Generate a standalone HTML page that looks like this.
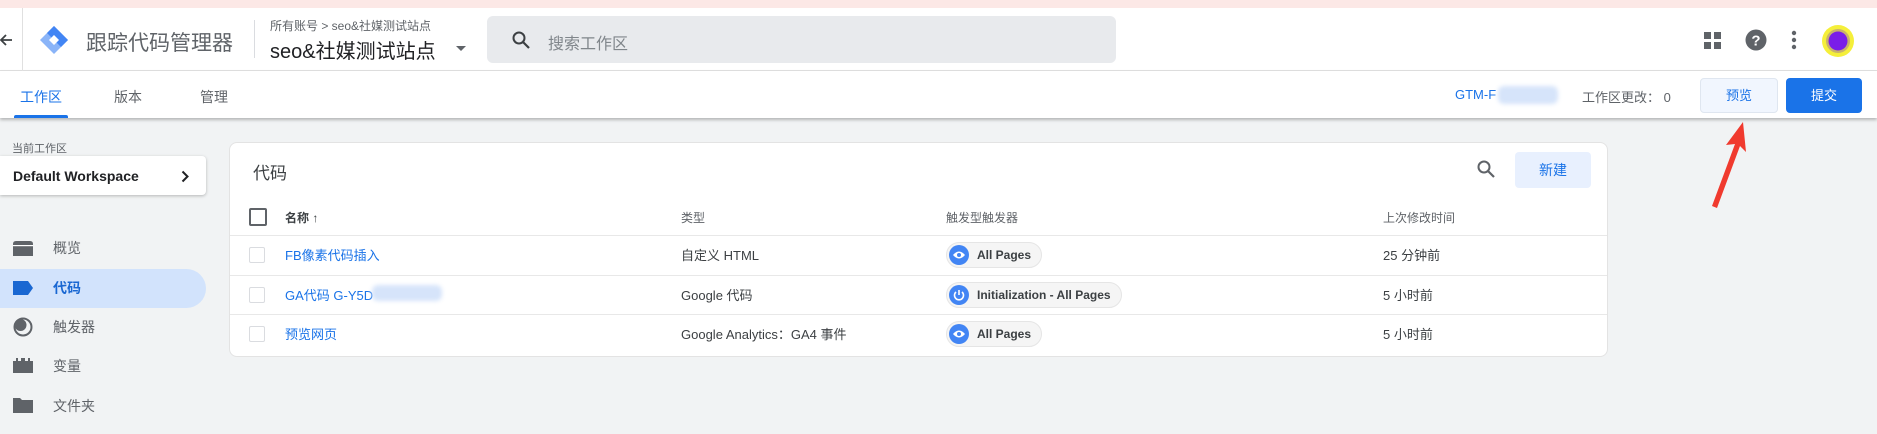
<!DOCTYPE html>
<html><head><meta charset="utf-8"><style>
*{box-sizing:border-box;margin:0;padding:0}
body{width:1877px;height:434px;overflow:hidden;background:#f1f3f4;font-family:"Liberation Sans","Noto Sans CJK SC",sans-serif;color:#3c4043;position:relative}
.a{position:absolute;white-space:nowrap}
.blur{position:absolute;background:#d6e4fa;filter:blur(2px);border-radius:6px}
</style></head><body>
<div class="a" style="left:0;top:0;width:1877px;height:8px;background:#fce8e6"></div>
<div class="a" style="left:0;top:8px;width:1877px;height:63px;background:#fff;border-bottom:1px solid #e0e0e0"></div>
<div class="a" style="left:0;top:71px;width:1877px;height:47px;background:#fff;box-shadow:0 2px 3px rgba(0,0,0,.25)"></div>
<svg class="a" style="left:0;top:32px" width="14" height="16" viewBox="0 0 14 16"><path d="M12 8H2M6 3L1 8l5 5" stroke="#3c4043" stroke-width="1.8" fill="none"/></svg>
<div class="a" style="left:22px;top:8px;width:1px;height:63px;background:#e0e0e0"></div>
<svg class="a" style="left:38px;top:24px" width="32" height="32" viewBox="0 0 32 32"><path d="M16 2L30 16 16 30 2 16Z" fill="#8ab4f8"/><path d="M16 2L9 9l14 14 7-7z" fill="#4285f4"/><path d="M16 11l5 5-5 5-5-5z" fill="#fff"/></svg>
<div class="a" style="left:86px;top:27px;font-size:21px;color:#5f6368">跟踪代码管理器</div>
<div class="a" style="left:254px;top:20px;width:1px;height:38px;background:#dadce0"></div>
<div class="a" style="left:270px;top:17px;font-size:12px;color:#5f6368">所有账号 &gt; seo&amp;社媒测试站点</div>
<div class="a" style="left:270px;top:35px;font-size:20px;color:#202124">seo&amp;社媒测试站点</div>
<svg class="a" style="left:456px;top:46px" width="10" height="6"><path d="M0 0h10L5 5z" fill="#5f6368"/></svg>
<div class="a" style="left:487px;top:16px;width:629px;height:47px;background:#e8eaed;border-radius:6px"></div>
<svg class="a" style="left:511px;top:30px" width="20" height="20" viewBox="0 0 20 20"><circle cx="8" cy="8" r="5.5" stroke="#3c4043" stroke-width="2" fill="none"/><path d="M12 12l6 6" stroke="#3c4043" stroke-width="2.2"/></svg>
<div class="a" style="left:548px;top:30px;font-size:16px;color:#80868b">搜索工作区</div>
<svg class="a" style="left:1704px;top:32px" width="17" height="17"><rect x="0" y="0" width="7" height="7" fill="#5f6368"/><rect x="10" y="0" width="7" height="7" fill="#5f6368"/><rect x="0" y="10" width="7" height="7" fill="#5f6368"/><rect x="10" y="10" width="7" height="7" fill="#5f6368"/></svg>
<svg class="a" style="left:1745px;top:29px" width="22" height="22" viewBox="0 0 22 22"><circle cx="11" cy="11" r="10.5" fill="#5f6368"/><text x="11" y="16.5" text-anchor="middle" font-size="15" font-weight="bold" fill="#fff" font-family="Liberation Sans">?</text></svg>
<svg class="a" style="left:1791px;top:30px" width="6" height="20"><circle cx="3" cy="3" r="2.2" fill="#5f6368"/><circle cx="3" cy="10" r="2.2" fill="#5f6368"/><circle cx="3" cy="17" r="2.2" fill="#5f6368"/></svg>
<svg class="a" style="left:1822px;top:25px" width="32" height="32"><circle cx="16" cy="16" r="16" fill="#f5ef3a"/><circle cx="16" cy="16" r="12" fill="#c9b26a"/><circle cx="16" cy="16" r="9.5" fill="#7a1ee8"/></svg>
<div class="a" style="left:20px;top:87px;font-size:14px;color:#1a73e8">工作区</div>
<div class="a" style="left:14px;top:115px;width:54px;height:3px;background:#1a73e8;border-radius:2px 2px 0 0"></div>
<div class="a" style="left:114px;top:87px;font-size:14px;color:#5f6368">版本</div>
<div class="a" style="left:200px;top:87px;font-size:14px;color:#5f6368">管理</div>
<div class="a" style="left:1455px;top:87px;font-size:13px;color:#1a73e8">GTM-F</div>
<div class="blur" style="left:1498px;top:86px;width:60px;height:18px"></div>
<div class="a" style="left:1582px;top:87px;font-size:13px;color:#5f6368">工作区更改：&nbsp;0</div>
<div class="a" style="left:1700px;top:78px;width:78px;height:35px;background:#f1f6fe;border:1px solid #dfe6f0;border-radius:4px;color:#1a73e8;font-size:13px;text-align:center;line-height:33px">预览</div>
<div class="a" style="left:1786px;top:78px;width:76px;height:35px;background:#1a73e8;border-radius:4px;color:#fff;font-size:13px;text-align:center;line-height:35px">提交</div>
<svg class="a" style="left:1700px;top:118px" width="60" height="92"><path d="M43 4L26 27l9-1-23 62 5 2 23-62 6 6z" fill="#f03a2e"/></svg>
<div class="a" style="left:12px;top:140px;font-size:11px;color:#5f6368">当前工作区</div>
<div class="a" style="left:0;top:156px;width:206px;height:39px;background:#fff;box-shadow:0 1px 3px rgba(0,0,0,.25);border-radius:0 4px 4px 0"></div>
<div class="a" style="left:13px;top:168px;font-size:14px;color:#202124;font-weight:bold">Default Workspace</div>
<svg class="a" style="left:181px;top:170px" width="9" height="13"><path d="M1.5 1.5l5 5-5 5" stroke="#202124" stroke-width="2" fill="none"/></svg>
<div class="a" style="left:0;top:269px;width:206px;height:39px;background:#d2e3fc;border-radius:0 20px 20px 0"></div>
<svg class="a" style="left:13px;top:240px" width="20" height="17"><path d="M0 4q0-3 3-3h14q3 0 3 3v12H0z" fill="#5f6368"/><rect x="0" y="5" width="20" height="1.2" fill="#fff"/></svg>
<svg class="a" style="left:13px;top:280px" width="20" height="16"><path d="M0 1h15l5 7-5 7H0z" fill="#1967d2"/></svg>
<svg class="a" style="left:13px;top:317px" width="20" height="20"><circle cx="10" cy="10" r="8.5" stroke="#5f6368" stroke-width="2" fill="none"/><circle cx="7.5" cy="8" r="6" fill="#5f6368"/></svg>
<svg class="a" style="left:13px;top:358px" width="20" height="15"><path d="M0 3h3V0h2v3h3V0h4v3h3V0h2v3h3v12H0z" fill="#5f6368"/></svg>
<svg class="a" style="left:13px;top:397px" width="20" height="16"><path d="M0 1h7l2 2h11v13H0z" fill="#5f6368"/></svg>
<div class="a" style="left:53px;top:238px;font-size:14px;color:#5f6368">概览</div>
<div class="a" style="left:53px;top:278px;font-size:14px;color:#1967d2;font-weight:bold">代码</div>
<div class="a" style="left:53px;top:317px;font-size:14px;color:#5f6368">触发器</div>
<div class="a" style="left:53px;top:356px;font-size:14px;color:#5f6368">变量</div>
<div class="a" style="left:53px;top:396px;font-size:14px;color:#5f6368">文件夹</div>
<div class="a" style="left:229px;top:142px;width:1379px;height:215px;background:#fff;border:1px solid #e3e3e3;border-radius:8px"></div>
<div class="a" style="left:253px;top:159px;font-size:17px;color:#3c4043">代码</div>
<svg class="a" style="left:1476px;top:159px" width="20" height="20" viewBox="0 0 20 20"><circle cx="8" cy="8" r="5.5" stroke="#5f6368" stroke-width="2" fill="none"/><path d="M12 12l6 6" stroke="#5f6368" stroke-width="2.2"/></svg>
<div class="a" style="left:1515px;top:152px;width:76px;height:36px;background:#e8f0fe;border-radius:4px;color:#1a73e8;font-size:14px;text-align:center;line-height:36px">新建</div>
<div class="a" style="left:249px;top:208px;width:18px;height:18px;border:2px solid #5f6368;border-radius:2px"></div>
<div class="a" style="left:285px;top:209px;font-size:12px;color:#3c4043;font-weight:bold">名称 ↑</div>
<div class="a" style="left:681px;top:209px;font-size:12px;color:#5f6368">类型</div>
<div class="a" style="left:946px;top:209px;font-size:12px;color:#5f6368">触发型触发器</div>
<div class="a" style="left:1383px;top:209px;font-size:12px;color:#5f6368">上次修改时间</div>
<div class="a" style="left:230px;top:235px;width:1377px;height:1px;background:#e8e8e8"></div>
<div class="a" style="left:230px;top:275px;width:1377px;height:1px;background:#e8e8e8"></div>
<div class="a" style="left:230px;top:314px;width:1377px;height:1px;background:#e8e8e8"></div>
<div class="a" style="left:249px;top:247px;width:16px;height:16px;border:1.5px solid #dadce0;border-radius:2px"></div>
<div class="a" style="left:249px;top:287px;width:16px;height:16px;border:1.5px solid #dadce0;border-radius:2px"></div>
<div class="a" style="left:249px;top:326px;width:16px;height:16px;border:1.5px solid #dadce0;border-radius:2px"></div>
<div class="a" style="left:285px;top:245px;font-size:13px;color:#1a73e8">FB像素代码插入</div>
<div class="a" style="left:285px;top:285px;font-size:13px;color:#1a73e8">GA代码 G-Y5D</div>
<div class="blur" style="left:372px;top:285px;width:70px;height:16px"></div>
<div class="a" style="left:285px;top:324px;font-size:13px;color:#1a73e8">预览网页</div>
<div class="a" style="left:681px;top:245px;font-size:13px;color:#3c4043">自定义 HTML</div>
<div class="a" style="left:681px;top:285px;font-size:13px;color:#3c4043">Google 代码</div>
<div class="a" style="left:681px;top:324px;font-size:13px;color:#3c4043">Google Analytics：GA4 事件</div>
<div class="a" style="left:1383px;top:245px;font-size:13px;color:#3c4043">25 分钟前</div>
<div class="a" style="left:1383px;top:285px;font-size:13px;color:#3c4043">5 小时前</div>
<div class="a" style="left:1383px;top:324px;font-size:13px;color:#3c4043">5 小时前</div>
<div class="a" style="left:946px;top:242px;width:96px;height:26px;background:#f5f5f5;border:1px solid #e5e5e5;border-radius:13px"></div>
<div class="a" style="left:946px;top:282px;width:176px;height:26px;background:#f5f5f5;border:1px solid #e5e5e5;border-radius:13px"></div>
<div class="a" style="left:946px;top:321px;width:96px;height:26px;background:#f5f5f5;border:1px solid #e5e5e5;border-radius:13px"></div>
<svg class="a" style="left:949px;top:245px" width="20" height="20"><circle cx="10" cy="10" r="10" fill="#4285f4"/><path d="M4 10q6-7 12 0q-6 7-12 0z" fill="#fff"/><circle cx="10" cy="10" r="2" fill="#4285f4"/></svg>
<svg class="a" style="left:949px;top:285px" width="20" height="20"><circle cx="10" cy="10" r="10" fill="#4285f4"/><path d="M7 7a4.5 4.5 0 1 0 6 0" stroke="#fff" stroke-width="1.6" fill="none"/><path d="M10 5v5" stroke="#fff" stroke-width="1.6"/></svg>
<svg class="a" style="left:949px;top:324px" width="20" height="20"><circle cx="10" cy="10" r="10" fill="#4285f4"/><path d="M4 10q6-7 12 0q-6 7-12 0z" fill="#fff"/><circle cx="10" cy="10" r="2" fill="#4285f4"/></svg>
<div class="a" style="left:977px;top:248px;font-size:12px;color:#3c4043;font-weight:bold">All Pages</div>
<div class="a" style="left:977px;top:288px;font-size:12px;color:#3c4043;font-weight:bold">Initialization - All Pages</div>
<div class="a" style="left:977px;top:327px;font-size:12px;color:#3c4043;font-weight:bold">All Pages</div>
</body></html>
